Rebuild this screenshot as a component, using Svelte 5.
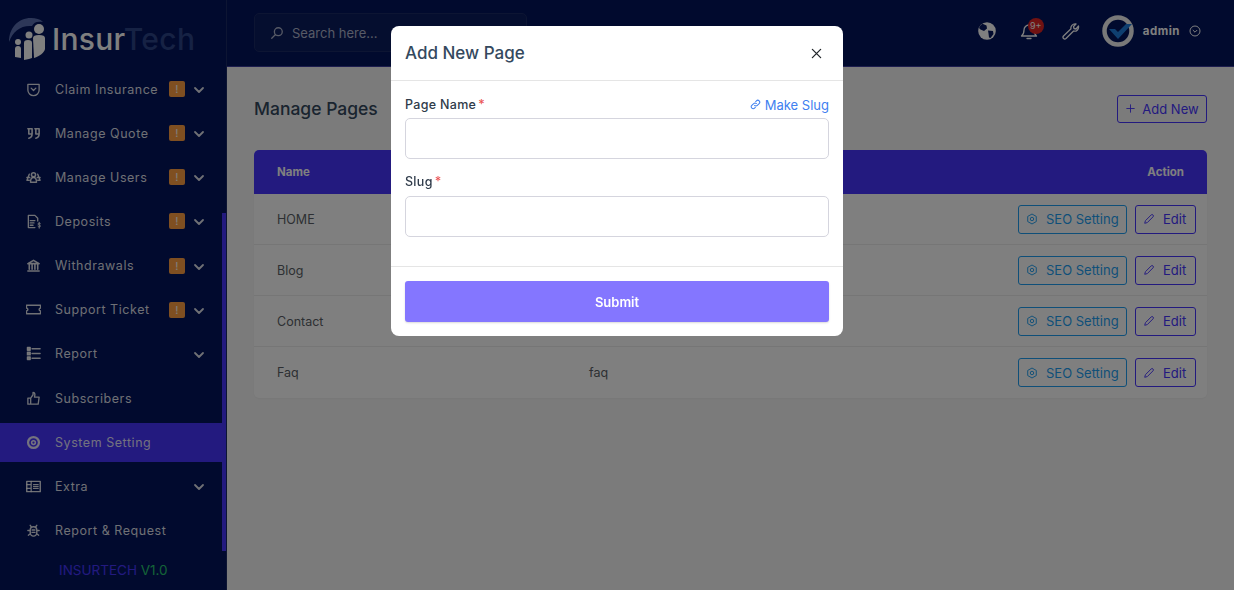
<script>
  const menu = [
    { label: 'Claim Insurance', icon: 'shield', badge: true, arrow: true },
    { label: 'Manage Quote', icon: 'quote', badge: true, arrow: true },
    { label: 'Manage Users', icon: 'users', badge: true, arrow: true },
    { label: 'Deposits', icon: 'deposit', badge: true, arrow: true },
    { label: 'Withdrawals', icon: 'bank', badge: true, arrow: true },
    { label: 'Support Ticket', icon: 'ticket', badge: true, arrow: true },
    { label: 'Report', icon: 'list', arrow: true },
    { label: 'Subscribers', icon: 'thumb' },
    { label: 'System Setting', icon: 'target', active: true },
    { label: 'Extra', icon: 'film', arrow: true },
    { label: 'Report & Request', icon: 'bug' }
  ];
  const pages = [
    { name: 'HOME', slug: '/' },
    { name: 'Blog', slug: 'blog' },
    { name: 'Contact', slug: 'contact' },
    { name: 'Faq', slug: 'faq' }
  ];
</script>

{#snippet menuIcon(name)}
  <svg class="mi" viewBox="0 0 16 16" fill="none" stroke="currentColor" stroke-width="1.4" stroke-linecap="round" stroke-linejoin="round">
    {#if name === 'shield'}
      <path d="M2 2.500h12v6a6 6 0 0 1-12 0z" /><path d="M5.500 6.500 8 9l2.500-2.500" />
    {:else if name === 'quote'}
      <path d="M2 3h4.500v5.500H3V3zM6.500 8c0 2.500-1 4.500-3.500 5M9.500 3H14v5.500h-3.500V3zM14 8c0 2.500-1 4.500-3.500 5" stroke-width="1.700" />
    {:else if name === 'users'}
      <circle cx="8" cy="5" r="2.200" stroke-width="1.600" /><path d="M4.800 13c0-3 1.200-5 3.200-5s3.200 2 3.200 5zM3.500 4.500 1 11h2.500M12.500 4.500 15 11h-2.500M1 8h3M12 8h3" stroke-width="1.500" />
    {:else if name === 'deposit'}
      <path d="M9.500 1.500H2.500v13h7M9.500 1.500l3 3v3M4.500 7h5M4.500 9.500h4M4.500 12h3" /><path d="M15.500 10.200c-.5-.8-2.800-.8-2.800.5s2.800.8 2.800 2.100-2.300 1.200-2.800.4M14.100 8.800v6.400" stroke-width="1" />
    {:else if name === 'bank'}
      <path d="M2 6 8 2.500 14 6zM3.500 6.500v5.500M6.500 6.500v5.500M9.500 6.500v5.500M12.500 6.500v5.500M2 13.800h12" stroke-width="1.700" />
    {:else if name === 'ticket'}
      <path d="M.5 3.500h15v3a1.500 1.500 0 0 0 0 3v3H.5v-3a1.500 1.500 0 0 0 0-3z" stroke-width="1.500" />
    {:else if name === 'list'}
      <path d="M6.500 3H15M6.500 8H15M6.500 13H15" stroke-width="1.600" /><rect x="1.500" y="1.500" width="3" height="3" fill="currentColor" /><rect x="1.500" y="6.500" width="3" height="3" fill="currentColor" /><rect x="1.500" y="11.500" width="3" height="3" fill="currentColor" />
    {:else if name === 'thumb'}
      <path d="M5 7.500 7.500 4V1.500c1.500 0 2 1 2 2.500L9 6.500h5l-1 7.500H5zM2 7.500h3V14H2z" />
    {:else if name === 'target'}
      <circle cx="8" cy="8" r="5.800" stroke-width="2.400" /><circle cx="8" cy="8" r="2" stroke-width="1.600" />
    {:else if name === 'film'}
      <rect x=".8" y="2.500" width="14.400" height="11" stroke-width="1.500" /><path d="M5.500 2.500v11M.8 6h4.700M.8 10h4.700M8 6h5M8 8h5M8 10h5" stroke-width="1.300" />
    {:else}
      <path d="M4.500 7.500a3.500 3.500 0 0 1 7 0V10a3.500 4 0 0 1-7 0zM6 4.500 4.500 2.500M10 4.500l1.500-2M4.500 8H2M11.500 8H14M4.500 11.500l-2 1.500M11.500 11.500l2 1.500M6.500 7.500h3M6.500 10h3" stroke-width="1.500" />
    {/if}
  </svg>
{/snippet}

{#snippet chevron(cls)}
  <svg class={cls} viewBox="0 0 12 12" fill="none" stroke="currentColor" stroke-width="1.800" stroke-linecap="round" stroke-linejoin="round"><path d="M2 4l4 4 4-4" /></svg>
{/snippet}

<div class="shell">
  <aside class="sidebar">
    <div class="logo">
      <svg class="logo-mark" viewBox="0 0 38 42">
        <path d="M0 24C0 10 9 0 22 0c5 0 9 1 12 4-6-1-9 0-11 4C12 7 4 13 0 24z" fill="#5a6fb0" />
        <circle cx="30" cy="11" r="5" fill="#fff" />
        <path d="M24 20c0-2 2-3 6-3s6 1 6 3v11c-1 4-5 7-11 9z" fill="#fff" />
        <circle cx="20" cy="17" r="3.500" fill="#fff" />
        <path d="M15 25c0-2 1-3 4-3s4 1 4 3v15l-3 1-5 1z" fill="#fff" />
        <circle cx="9" cy="24" r="3" fill="#fff" />
        <path d="M6 31c0-2 1-3 3-3s3 1 3 3v9l-6-1z" fill="#fff" />
      </svg>
      <span class="logo-text">Insur<span class="logo-tech">Tech</span></span>
    </div>
    <nav class="menu">
      {#each menu as item}
        <div class="menu-item" class:active={item.active}>
          {@render menuIcon(item.icon)}
          <span class="menu-label">{item.label}</span>
          {#if item.badge}<span class="warn">!</span>{/if}
          {#if item.arrow}{@render chevron('chev')}{/if}
        </div>
      {/each}
    </nav>
    <div class="version">INSURTECH <span>V1.0</span></div>
    <div class="thumb"></div>
  </aside>

  <div class="main">
    <header class="topbar">
      <div class="search">
        <svg class="search-ic" viewBox="0 0 16 16" fill="none" stroke="currentColor" stroke-width="1.500" stroke-linecap="round"><circle cx="9.500" cy="6.500" r="4.500" /><path d="M6 10l-4 4" /></svg>
        <span>Search here...</span>
      </div>
      <div class="top-right">
        <svg class="top-ic globe" viewBox="0 0 18 18"><circle cx="9" cy="9" r="8.800" fill="#fff" /><path d="M4.500 1.800 8.500 3.500 9 6.500 6 9 2.500 7.500 1 6A8 8 0 0 1 4.500 1.800zM10 8.500l5 .5.500 3-3 4-1.500-.5-.5-4z" fill="#02145c" /></svg>
        <div class="bell">
          <svg class="top-ic" viewBox="0 0 18 18" fill="none" stroke="#fff" stroke-width="1.300" stroke-linecap="round" stroke-linejoin="round"><path d="M1.500 14c2-1.500 2.500-3 2.500-6a5 5 0 0 1 10 0c0 3 .5 4.500 2.500 6zM7 16.500h4" /></svg>
          <span class="bell-badge">9+</span>
        </div>
        <svg class="top-ic wrench" viewBox="0 0 18 18" fill="none" stroke="#fff" stroke-width="1.300" stroke-linejoin="round"><path d="M1.500 14 9 6.800c-.6-2.400 1.400-5.300 5-4.800l-2.500 2.500.5 2 2 .5L16.500 4c.6 3.600-2.300 5.800-4.900 5L4 16.500c-.8.700-1.700.700-2.400 0s-.8-1.700-.1-2.500z" /></svg>
        <div class="user">
          <svg class="avatar" viewBox="0 0 32 32"><circle cx="16" cy="16" r="13.500" fill="#02145c" stroke="#f2f2f2" stroke-width="4.500" /><path d="M7 14h6l3 3 8-8h6L16 24z" fill="#1f7fe0" /></svg>
          <span class="user-name">admin</span>
          <svg class="user-ch" viewBox="0 0 12 12" fill="none" stroke="#fff" stroke-width="1"><circle cx="6" cy="6" r="5" /><path d="M3.800 5 6 7.200 8.200 5" /></svg>
        </div>
      </div>
    </header>

    <main class="content">
      <div class="page-head">
        <h1>Manage Pages</h1>
        <button class="add-new">
          <svg viewBox="0 0 12 12" fill="none" stroke="currentColor" stroke-width="1"><path d="M6 1.500v9M1.500 6h9" /></svg>
          Add New
        </button>
      </div>
      <div class="table">
        <div class="row head">
          <span>Name</span>
          <span class="slug-col"></span>
          <span class="action-col">Action</span>
        </div>
        {#each pages as page}
          <div class="row">
            <span>{page.name}</span>
            <span class="slug-col">{page.slug}</span>
            <span class="action-col">
              <button class="btn seo">
                <svg viewBox="0 0 14 14" fill="none" stroke="currentColor" stroke-width="1.100"><path d="M7 1.200 12 4v6l-5 2.800L2 10V4z" stroke-linejoin="round" /><circle cx="7" cy="7" r="2" /></svg>
                SEO Setting
              </button>
              <button class="btn edit">
                <svg viewBox="0 0 14 14" fill="none" stroke="currentColor" stroke-width="1.100" stroke-linejoin="round"><path d="M2 12l.8-3L9.500 2.300a1.400 1.400 0 0 1 2.200 2.200L5 11.200z" /></svg>
                Edit
              </button>
            </span>
          </div>
        {/each}
      </div>
    </main>
  </div>
</div>

<div class="backdrop">
  <div class="modal">
    <div class="modal-head">
      <h2>Add New Page</h2>
      <svg class="close" viewBox="0 0 12 12" fill="none" stroke="#212529" stroke-width="1.400" stroke-linecap="round"><path d="M1.500 1.500l9 9M10.500 1.500l-9 9" /></svg>
    </div>
    <div class="modal-body">
      <div class="field">
        <div class="field-label">
          <span>Page Name<i>*</i></span>
          <a class="slug-link" href="#top">
            <svg viewBox="0 0 12 12" fill="none" stroke="currentColor" stroke-width="1.100" stroke-linecap="round"><path d="M5 7a2 2 0 0 0 3 0l2-2a2 2 0 0 0-3-3l-.8.8M7 5a2 2 0 0 0-3 0L2 7a2 2 0 0 0 3 3l.8-.8" /></svg>
            Make Slug
          </a>
        </div>
        <input type="text" />
      </div>
      <div class="field">
        <div class="field-label"><span>Slug<i>*</i></span></div>
        <input type="text" />
      </div>
    </div>
    <div class="modal-foot">
      <button class="submit">Submit</button>
    </div>
  </div>
</div>

<style>
  :global(body) {
    margin: 0;
    background: #f7f7f7;
    overflow: hidden;
  }

  .shell {
    display: flex;
    width: 1234px;
    height: 590px;
    font-family: Inter, "Open Sans", sans-serif;
    color: #34495e;
  }

  .sidebar {
    position: relative;
    flex: 0 0 226px;
    height: 590px;
    background: #02145c;
    border-right: 1px solid #1a2a66;
    overflow: hidden;
  }

  .logo {
    display: flex;
    align-items: center;
    gap: 5px;
    height: 60px;
    padding: 18px 0 0 9px;
    box-sizing: border-box;
  }

  .logo-mark {
    width: 38px;
    height: 42px;
    flex: none;
  }

  .logo-text {
    font-size: 30px;
    font-weight: 500;
    color: #fff;
    letter-spacing: 0.300px;
  }

  .logo-tech {
    color: #2d4488;
  }

  .menu {
    display: flex;
    flex-direction: column;
    margin-top: 7px;
  }

  .menu-item {
    display: flex;
    align-items: center;
    height: 44.150px;
    padding-left: 26px;
    color: rgba(255, 255, 255, 0.88);
    font-size: 12.500px;
    letter-spacing: 0.550px;
    flex: none;
  }

  .menu-item.active {
    background: #4634ff;
    height: 39px;
    margin: 2.500px 0;
  }

  .mi {
    width: 15px;
    height: 15px;
    flex: none;
  }

  .menu-label {
    margin-left: 14px;
    white-space: nowrap;
    flex: 1;
  }

  .warn {
    width: 16px;
    height: 16px;
    border-radius: 2px;
    background: #ff9f43;
    color: #fff;
    font-size: 11px;
    line-height: 16px;
    text-align: center;
    margin-right: 8px;
  }

  .chev {
    width: 12px;
    height: 12px;
    margin-right: 21px;
    margin-top: 2px;
    flex: none;
  }

  .version {
    margin: 10px 0 0 59px;
    font-size: 13.500px;
    color: #4634ff;
    white-space: nowrap;
  }

  .version span {
    color: #28c76f;
  }

  .thumb {
    position: absolute;
    right: 0;
    top: 213px;
    width: 4px;
    height: 338px;
    background: #4634ff;
  }

  .main {
    flex: 1;
    display: flex;
    flex-direction: column;
    min-width: 0;
  }

  .topbar {
    display: flex;
    align-items: center;
    justify-content: space-between;
    flex: none;
    height: 66px;
    background: #02145c;
    border-bottom: 1px solid #3a3a9c;
    padding: 0 33px 0 27px;
  }

  .search {
    display: flex;
    align-items: center;
    gap: 8px;
    width: 273px;
    height: 39px;
    box-sizing: border-box;
    padding-left: 15px;
    background: #0b1c5e;
    border: 1px solid #1a2a66;
    border-radius: 5px;
    color: #aeb4cc;
    font-size: 13px;
    margin-top: -1px;
  }

  .search-ic {
    width: 14px;
    height: 14px;
  }

  .top-right {
    display: flex;
    align-items: center;
    margin-top: -5px;
  }

  .top-ic {
    display: block;
    width: 18px;
    height: 18px;
  }

  .bell {
    position: relative;
    margin-left: 24px;
  }

  .bell-badge {
    position: absolute;
    left: 8px;
    top: -4px;
    width: 16px;
    height: 16px;
    border-radius: 50%;
    background: #e02424;
    color: #fff;
    font-size: 9px;
    line-height: 16px;
    text-align: center;
  }

  .wrench {
    margin-left: 24px;
  }

  .user {
    display: flex;
    align-items: center;
    margin-left: 22px;
  }

  .avatar {
    width: 32px;
    height: 32px;
  }

  .user-name {
    margin-left: 9px;
    color: #fff;
    font-size: 11.500px;
    font-weight: 700;
    letter-spacing: 0.500px;
  }

  .user-ch {
    width: 12px;
    height: 12px;
    margin-left: 9px;
  }

  .content {
    flex: 1;
    padding: 26px 27px 0 27px;
  }

  .page-head {
    display: flex;
    align-items: center;
    justify-content: space-between;
    height: 30px;
    margin-bottom: 27px;
  }

  h1 {
    margin: 0;
    font-size: 17.500px;
    font-weight: 500;
    color: #34495e;
  }

  .add-new {
    display: flex;
    align-items: center;
    justify-content: center;
    gap: 6px;
    width: 90px;
    height: 28px;
    background: transparent;
    border: 1px solid #4634ff;
    border-radius: 3px;
    color: #4634ff;
    font-family: inherit;
    font-size: 13px;
    white-space: nowrap;
    margin-top: 1px;
  }

  .add-new svg {
    width: 11px;
    height: 11px;
  }

  .table {
    background: #fff;
    border-radius: 5px;
    overflow: hidden;
    box-shadow: 0 1px 2px rgba(0, 0, 0, 0.04);
  }

  .row {
    display: grid;
    grid-template-columns: 312px 1fr auto;
    align-items: center;
    height: 51px;
    box-sizing: border-box;
    padding: 0 11px 0 23px;
    border-bottom: 1px solid #ededed;
    font-size: 12.500px;
    color: #5a5f66;
  }

  .row:last-child {
    border-bottom: none;
  }

  .row.head {
    height: 44px;
    background: #4634ff;
    color: #fff;
    font-weight: 700;
    font-size: 11.500px;
    border-bottom: none;
    padding-right: 23px;
  }

  .action-col {
    display: flex;
    gap: 8px;
    justify-content: flex-end;
  }

  .btn {
    display: flex;
    align-items: center;
    gap: 8px;
    height: 29px;
    box-sizing: border-box;
    background: transparent;
    border-radius: 3px;
    font-family: inherit;
    font-size: 13px;
    padding: 0 7px;
    white-space: nowrap;
  }

  .btn svg {
    width: 12px;
    height: 12px;
    flex: none;
  }

  .seo {
    width: 109px;
    border: 1px solid #1e9ff2;
    color: #1e9ff2;
  }

  .edit {
    width: 61px;
    border: 1px solid #4634ff;
    color: #4634ff;
  }

  .backdrop {
    position: fixed;
    inset: 0;
    background: rgba(0, 0, 0, 0.5);
    font-family: Inter, "Open Sans", sans-serif;
  }

  .modal {
    position: absolute;
    left: 391px;
    top: 26px;
    width: 452px;
    height: 310px;
    background: #fff;
    border-radius: 8px;
    display: flex;
    flex-direction: column;
  }

  .modal-head {
    display: flex;
    align-items: center;
    justify-content: space-between;
    height: 55px;
    box-sizing: border-box;
    flex: none;
    padding: 0 21px 0 14px;
    border-bottom: 1px solid #e5e5e5;
  }

  h2 {
    margin: 0;
    font-size: 17px;
    font-weight: 500;
    color: #34495e;
  }

  .close {
    width: 11px;
    height: 11px;
  }

  .modal-body {
    flex: 1;
    padding: 15px 14px 0;
    display: flex;
    flex-direction: column;
    gap: 14px;
  }

  .field-label {
    display: flex;
    justify-content: space-between;
    align-items: center;
    height: 16px;
    margin-bottom: 6px;
    font-size: 12.500px;
    font-weight: 500;
    letter-spacing: 0.300px;
    color: #2f3b4a;
  }

  .field + .field .field-label {
    margin-bottom: 7px;
  }

  .field-label i {
    color: #ea5455;
    font-style: normal;
    margin-left: 2px;
  }

  .slug-link {
    display: flex;
    align-items: center;
    gap: 4px;
    color: #4080f0;
    font-size: 13px;
    font-weight: 400;
    letter-spacing: 0;
    text-decoration: none;
    padding-top: 1px;
  }

  .slug-link svg {
    width: 11px;
    height: 11px;
  }

  input {
    display: block;
    width: 100%;
    height: 41px;
    box-sizing: border-box;
    border: 1px solid #d5d5de;
    border-radius: 5px;
    background: #fff;
  }

  .modal-foot {
    flex: none;
    height: 70px;
    box-sizing: border-box;
    padding: 14px 14px 0;
    border-top: 1px solid #e5e5e5;
  }

  .submit {
    width: 100%;
    height: 41px;
    border: none;
    border-radius: 3px;
    background: #8476ff;
    color: #fff;
    font-family: inherit;
    font-size: 13px;
    font-weight: 600;
    box-shadow: 0 1px 2px rgba(0, 0, 0, 0.15);
  }
</style>
